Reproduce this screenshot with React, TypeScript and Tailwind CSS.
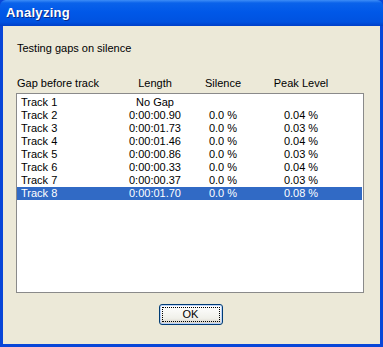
const rows = [
  { name: 'Track 1', length: 'No Gap', silence: '', peak: '' },
  { name: 'Track 2', length: '0:00:00.90', silence: '0.0 %', peak: '0.04 %' },
  { name: 'Track 3', length: '0:00:01.73', silence: '0.0 %', peak: '0.03 %' },
  { name: 'Track 4', length: '0:00:01.46', silence: '0.0 %', peak: '0.04 %' },
  { name: 'Track 5', length: '0:00:00.86', silence: '0.0 %', peak: '0.03 %' },
  { name: 'Track 6', length: '0:00:00.33', silence: '0.0 %', peak: '0.04 %' },
  { name: 'Track 7', length: '0:00:00.37', silence: '0.0 %', peak: '0.03 %' },
  { name: 'Track 8', length: '0:00:01.70', silence: '0.0 %', peak: '0.08 %' },
];

export default function App() {
  return (
    <div
      className="w-[383px] h-[347px] flex flex-col bg-[#0846d8] text-[11px] text-black"
      style={{ fontFamily: '"Liberation Sans", Arial, sans-serif' }}
    >
      {/* Title bar */}
      <div className="h-[26px] shrink-0 flex items-center pl-[6px] rounded-t-[6px] bg-[linear-gradient(to_bottom,#3d8df7_0px,#0a62ea_3px,#0058e8_12px,#0052e0_22px,#0040c8_26px)]">
        <span className="text-white font-bold text-[13px] tracking-[0.3px] [text-shadow:1px_1px_0_#0a2a8a]">
          Analyzing
        </span>
      </div>

      {/* Client area */}
      <div className="flex-1 mx-[3px] mb-[3px] bg-[#ece9d8] flex flex-col pl-[13px] pr-[17px]">
        <div className="pl-[1px] mt-[16px] h-[13px] leading-[13px]">Testing gaps on silence</div>

        {/* Column headers */}
        <div className="mt-[22px] h-[13px] leading-[13px] grid grid-cols-[98px_80px_56px_100px] pl-[1px]">
          <span>Gap before track</span>
          <span className="text-center">Length</span>
          <span className="text-center">Silence</span>
          <span className="text-center">Peak Level</span>
        </div>

        {/* List */}
        <div className="mt-[3px] w-[348px] h-[200px] bg-white border border-[#8a8a8a] pt-[2px] pr-[1px]">
          {rows.map((r, i) => {
            const sel = i === rows.length - 1;
            return (
              <div
                key={r.name}
                className={`h-[13px] leading-[13px] grid grid-cols-[98px_80px_56px_100px] ${
                  sel ? 'bg-[#316ac5] text-white' : ''
                }`}
              >
                <span className="pl-[4px]">{r.name}</span>
                <span className="text-center">{r.length}</span>
                <span className="text-center">{r.silence}</span>
                <span className="text-center">{r.peak}</span>
              </div>
            );
          })}
        </div>

        {/* OK button */}
        <div className="flex justify-center mt-[11px] pl-[2px]">
          <button className="w-[64px] h-[21px] rounded-[3px] border border-[#003c74] bg-[linear-gradient(to_bottom,#ffffff,#f0f0ea_70%,#d6d0c5)] p-[2px] shadow-[inset_0_0_0_1px_#b9d1fa]">
            <div className="w-full h-full border border-dotted border-black flex items-center justify-center leading-none">
              OK
            </div>
          </button>
        </div>
      </div>
    </div>
  );
}
